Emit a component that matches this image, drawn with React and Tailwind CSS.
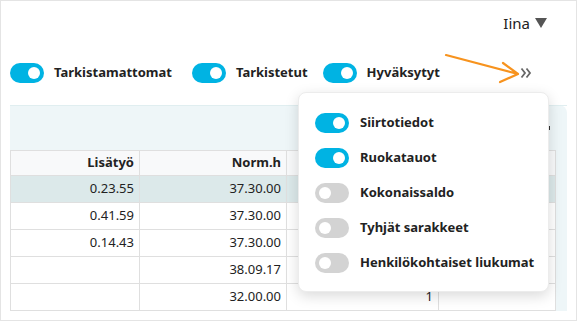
import React from "react";

const rows = [
    { lisatyo: "0.23.55", norm: "37.30.00", c3: "", active: true },
    { lisatyo: "0.41.59", norm: "37.30.00", c3: "" },
    { lisatyo: "0.14.43", norm: "37.30.00", c3: "" },
    { lisatyo: "", norm: "38.09.17", c3: "" },
    { lisatyo: "", norm: "32.00.00", c3: "1" },
];

const filters = [
    { label: "Siirtotiedot", on: true },
    { label: "Ruokatauot", on: true },
    { label: "Kokonaissaldo", on: false },
    { label: "Tyhjät sarakkeet", on: false },
    { label: "Henkilökohtaiset liukumat", on: false },
];

function Toggle({ on }) {
    return (
        <div
            className={
                on
                    ? "w-[34px] h-[20px] rounded-full bg-[#00b3e3] flex items-center justify-end pr-[4px] shrink-0"
                    : "w-[34px] h-[20px] rounded-full bg-[#d3d3d3] flex items-center justify-start pl-[4px] shrink-0"
            }
        >
            <div className="w-[12px] h-[12px] rounded-full bg-white" />
        </div>
    );
}

export default function App() {
    return (
        <div className="relative w-[577px] h-[321px] bg-white border border-[#e4e4e4] overflow-hidden font-['Noto_Sans',sans-serif] text-[#222]">
            {/* user menu */}
            <div className="flex justify-end pr-[28px] pt-[3px] h-[40px]">
                <div className="flex items-center gap-[4px] text-[15px] leading-[20px]">
                    <span>Iina</span>
                    <svg width="14" height="12" viewBox="0 0 14 12">
                        <path d="M1 1h12L7 11z" fill="#555" />
                    </svg>
                </div>
            </div>

            {/* status toggles */}
            <div className="flex items-center h-[22px] mt-[21px] pl-[9px]">
                <Toggle on />
                <span className="ml-[10px] text-[13px] font-bold">Tarkistamattomat</span>
                <div className="ml-[20px]">
                    <Toggle on />
                </div>
                <span className="ml-[10px] text-[13px] font-bold">Tarkistetut</span>
                <div className="ml-[15px]">
                    <Toggle on />
                </div>
                <span className="ml-[10px] text-[13px] font-bold">Hyväksytyt</span>
                <svg className="ml-auto mr-[44px]" width="12" height="12" viewBox="0 0 12 12">
                    <path d="M1.5 1.5L5 6l-3.5 4.5M6.5 1.5L10 6l-3.5 4.5" fill="none" stroke="#666" strokeWidth="1.8" />
                </svg>
            </div>

            {/* table panel */}
            <div className="mt-[21px] mx-[9px] h-[206px] bg-[#eef6f8] rounded-tr-lg flex flex-col">
                <div className="h-[47px] border-t border-[#e0eef0] flex justify-end items-center pr-[17px]">
                    <div className="w-[2px] h-[4px] bg-[#333]" />
                </div>
                <table className="w-[545px] border-collapse bg-white text-[13px] table-fixed">
                    <colgroup>
                        <col className="w-[129px]" />
                        <col className="w-[147px]" />
                        <col className="w-[152px]" />
                        <col className="w-[117px]" />
                    </colgroup>
                    <thead>
                        <tr className="h-[25px] bg-[#f8f9fa]">
                            <th className="border border-[#dfdfdf] text-right pr-[5px] font-bold">Lisätyö</th>
                            <th className="border border-[#dfdfdf] text-right pr-[5px] font-bold">Norm.h</th>
                            <th className="border border-[#dfdfdf]" />
                            <th className="border border-[#dfdfdf]" />
                        </tr>
                    </thead>
                    <tbody>
                        {rows.map((row, i) => (
                            <tr key={i} className={row.active ? "h-[27px] bg-[#dce9ea]" : "h-[27px]"}>
                                <td className="border border-[#dfdfdf] text-right pr-[5px]">{row.lisatyo}</td>
                                <td className="border border-[#dfdfdf] text-right pr-[5px]">{row.norm}</td>
                                <td className="border border-[#dfdfdf] text-right pr-[5px]">{row.c3}</td>
                                <td className="border border-[#dfdfdf]" />
                            </tr>
                        ))}
                    </tbody>
                </table>
            </div>

            {/* orange hint arrow */}
            <svg className="absolute left-[440px] top-[48px]" width="85" height="40" viewBox="0 0 85 40">
                <path
                    d="M5 6L77 25M62 14L77 25L59 33"
                    fill="none"
                    stroke="#f7931e"
                    strokeWidth="2.2"
                    strokeLinecap="round"
                    strokeLinejoin="round"
                />
            </svg>

            {/* column options popover */}
            <div className="absolute left-[297px] top-[91px] w-[251px] h-[200px] bg-white rounded-lg border border-[#ececec] shadow-[0_4px_14px_rgba(0,0,0,0.15)] pt-[20px] pl-[16px] flex flex-col gap-[15px]">
                {filters.map((f) => (
                    <div key={f.label} className="flex items-center h-[20px]">
                        <Toggle on={f.on} />
                        <span className="ml-[11px] text-[13px] font-bold">{f.label}</span>
                    </div>
                ))}
            </div>
        </div>
    );
}
